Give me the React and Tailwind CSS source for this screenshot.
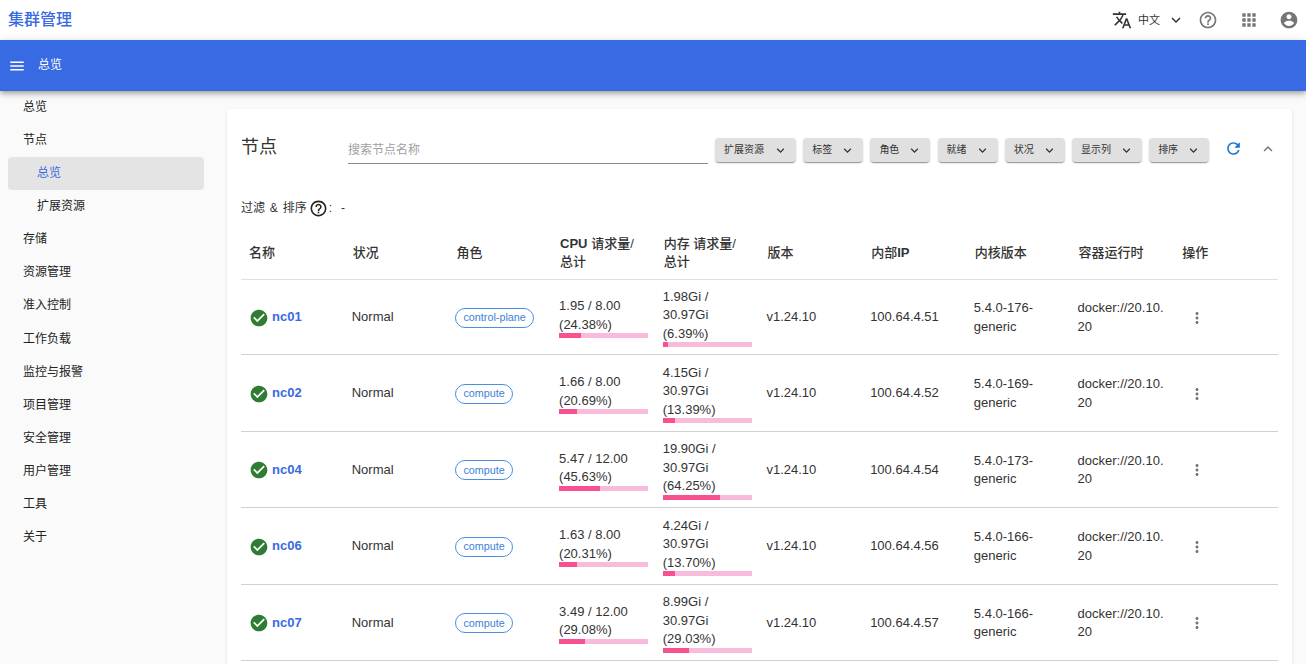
const P = {
  menu: "M3 18h18v-2H3v2zm0-5h18v-2H3v2zm0-7v2h18V6H3z",
  translate: "M12.87 15.07l-2.54-2.51.03-.03c1.74-1.94 2.98-4.17 3.71-6.53H17V4h-7V2H8v2H1v1.99h11.17C11.5 7.92 10.44 9.75 9 11.35 8.07 10.32 7.3 9.19 6.69 8h-2c.73 1.63 1.73 3.17 2.98 4.56l-5.09 5.02L4 19l5-5 3.11 3.11.76-2.04zM18.5 10h-2L12 22h2l1.12-3h4.75L21 22h2l-4.5-12zm-2.62 7l1.62-4.33L19.12 17h-3.24z",
  more: "M16.59 8.59L12 13.17 7.41 8.59 6 10l6 6 6-6z",
  less: "M12 8l-6 6 1.41 1.41L12 10.83l4.59 4.58L18 14z",
  help: "M11 18h2v-2h-2v2zm1-16C6.48 2 2 6.48 2 12s4.48 10 10 10 10-4.48 10-10S17.52 2 12 2zm0 18c-4.41 0-8-3.59-8-8s3.59-8 8-8 8 3.59 8 8-3.59 8-8 8zm0-14c-2.21 0-4 1.79-4 4h2c0-1.1.9-2 2-2s2 .9 2 2c0 2-3 1.75-3 5h2c0-2.25 3-2.5 3-5 0-2.21-1.79-4-4-4z",
  apps: "M4 8h4V4H4v4zm6 12h4v-4h-4v4zm-6 0h4v-4H4v4zm0-6h4v-4H4v4zm6 0h4v-4h-4v4zm6-10v4h4V4h-4zm-6 4h4V4h-4v4zm6 6h4v-4h-4v4zm0 6h4v-4h-4v4z",
  account: "M12 2C6.48 2 2 6.48 2 12s4.48 10 10 10 10-4.48 10-10S17.52 2 12 2zm0 3c1.66 0 3 1.34 3 3s-1.34 3-3 3-3-1.34-3-3 1.34-3 3-3zm0 14.2c-2.5 0-4.71-1.28-6-3.22.03-1.99 4-3.08 6-3.08 1.99 0 5.97 1.09 6 3.08-1.29 1.94-3.5 3.22-6 3.22z",
  refresh: "M17.65 6.35C16.2 4.9 14.35 4 12 4c-4.42 0-7.99 3.58-7.99 8s3.57 8 7.99 8c3.73 0 6.84-2.55 7.73-6h-2.08c-.82 2.33-3.04 4-5.65 4-3.31 0-6-2.69-6-6s2.69-6 6-6c1.66 0 3.14.69 4.22 1.78L13 11h7V4l-2.35 2.35z",
  vert: "M12 8c1.1 0 2-.9 2-2s-.9-2-2-2-2 .9-2 2 .9 2 2 2zm0 2c-1.1 0-2 .9-2 2s.9 2 2 2 2-.9 2-2-.9-2-2-2zm0 6c-1.1 0-2 .9-2 2s.9 2 2 2 2-.9 2-2-.9-2-2-2z",
  check: "M12 2C6.48 2 2 6.48 2 12s4.48 10 10 10 10-4.48 10-10S17.52 2 12 2zm-2 15l-5-5 1.41-1.41L10 14.17l7.59-7.59L19 8l-9 9z",
};

const Icon = ({ d, className }) => (
  <svg viewBox="0 0 24 24" fill="currentColor" className={className}>
    <path d={d} />
  </svg>
);

const nav = [
  ["总览"], ["节点"], ["总览", "active"], ["扩展资源", "sub"], ["存储"], ["资源管理"], ["准入控制"],
  ["工作负载"], ["监控与报警"], ["项目管理"], ["安全管理"], ["用户管理"], ["工具"], ["关于"],
];

const filters = [
  ["扩展资源", "w-[81px]"], ["标签", "w-[60px]"], ["角色", "w-[60px]"], ["就绪", "w-[60px]"],
  ["状况", "w-[60px]"], ["显示列", "w-[70px]"], ["排序", "w-[60px]"],
];

const B = ({ children }) => <span className="font-bold">{children}</span>;

const heads = [
  "名称", "状况", "角色",
  <div key="cpu" className="leading-[18px]">
    <div><B>CPU</B><span> 请求量/</span></div>
    <div>总计</div>
  </div>,
  <div key="mem" className="leading-[18px]">
    <div>内存 请求量/</div>
    <div>总计</div>
  </div>,
  "版本",
  <span key="ip">内部<B>IP</B></span>,
  "内核版本", "容器运行时", "操作",
];

const rows = [
  { h: "h-[75px]", n: "nc01", role: "control-plane", c: ["1.95 / 8.00", "(24.38%)"], cp: 24.38, m: ["1.98Gi /", "30.97Gi", "(6.39%)"], mp: 6.39, ip: "100.64.4.51", k: "176" },
  { h: "h-[77px]", n: "nc02", role: "compute", c: ["1.66 / 8.00", "(20.69%)"], cp: 20.69, m: ["4.15Gi /", "30.97Gi", "(13.39%)"], mp: 13.39, ip: "100.64.4.52", k: "169" },
  { h: "h-[76px]", n: "nc04", role: "compute", c: ["5.47 / 12.00", "(45.63%)"], cp: 45.63, m: ["19.90Gi /", "30.97Gi", "(64.25%)"], mp: 64.25, ip: "100.64.4.54", k: "173" },
  { h: "h-[77px]", n: "nc06", role: "compute", c: ["1.63 / 8.00", "(20.31%)"], cp: 20.31, m: ["4.24Gi /", "30.97Gi", "(13.70%)"], mp: 13.7, ip: "100.64.4.56", k: "166" },
  { h: "h-[76px]", n: "nc07", role: "compute", c: ["3.49 / 12.00", "(29.08%)"], cp: 29.08, m: ["8.99Gi /", "30.97Gi", "(29.03%)"], mp: 29.03, ip: "100.64.4.57", k: "166" },
];

const Usage = ({ lines, pct }) => (
  <div className="w-[89px]">
    {lines.map((l) => (
      <div key={l}>{l}</div>
    ))}
    <div className="h-[5px] -mt-[1px] bg-[#f8bbdc]">
      <div className="h-full bg-[#f8518f]" style={{ width: `${pct}%` }} />
    </div>
  </div>
);

const cell = "pl-[7px] pr-2 pt-[8px] pb-[6px] align-middle";

export default function App() {
  return (
    <div className="h-[664px] overflow-hidden bg-[#fafafa] text-[13px] leading-[18.5px] text-[#333] font-['Liberation_Sans','Noto_Sans_CJK_SC',sans-serif]">
      <header className="h-10 bg-white flex items-center pl-2 pr-[7px]">
        <div className="text-[16px] font-medium text-[#3a6ae2]">集群管理</div>
        <div className="ml-auto flex items-center text-[#757575]">
          <Icon d={P.translate} className="w-[20px] h-[20px] text-[#333]" />
          <span className="ml-[6px] text-[11px] text-[#333]">中文</span>
          <Icon d={P.more} className="ml-[7px] w-[18px] h-[18px] text-[#333]" />
          <Icon d={P.help} className="ml-[13px] w-[20px] h-[20px]" />
          <Icon d={P.apps} className="ml-[21px] w-[20px] h-[20px]" />
          <Icon d={P.account} className="ml-[20px] w-[20px] h-[20px]" />
        </div>
      </header>

      <div className="relative z-10 h-[51px] bg-[#386ae3] text-white flex items-center pl-[8px] shadow-[0_2px_4px_-1px_rgba(0,0,0,0.2),0_4px_5px_0_rgba(0,0,0,0.14),0_1px_10px_0_rgba(0,0,0,0.12)]">
        <Icon d={P.menu} className="w-[18px] h-[18px]" />
        <span className="ml-[12px] text-[12px]">总览</span>
      </div>

      <div className="flex">
        <nav className="w-[212px] shrink-0 -mt-[0.7px] pl-2">
          {nav.map(([label, kind], i) => (
            <div
              key={i}
              className={
                kind === "active"
                  ? "w-[196px] h-[33.15px] flex items-center pl-[29px] rounded bg-[#e4e4e4] text-[#3a6ae2] text-[12px]"
                  : kind === "sub"
                  ? "h-[33.15px] flex items-center pl-[29px] text-[12px] text-[#222]"
                  : "h-[33.15px] flex items-center pl-[15px] text-[12px] text-[#222]"
              }
            >
              {label}
            </div>
          ))}
        </nav>

        <main className="ml-[15px] mt-[18px] w-[1065px] h-[700px] shrink-0 bg-white rounded shadow-[0_1px_3px_0_rgba(0,0,0,0.12)] px-[14px]">
          <div className="flex items-start pt-[27px] h-[90px]">
            <h1 className="text-[18px] leading-[20px] pt-[1px] text-[#333] w-[107px]">节点</h1>
            <div className="w-[360px] h-[28px] border-b border-[#8a8a8a] text-[12px] text-[#a0a0a0] leading-[28px]">搜索节点名称</div>
            <div className="ml-[7px] flex gap-[7.2px] mt-[2px]">
              {filters.map(([f, w]) => (
                <div key={f} className={`${w} h-[24px] flex items-center justify-between pl-[9px] pr-[8px] rounded bg-[#e0e0e0] text-[10px] text-[#333] shadow-[0_2px_1px_-1px_rgba(0,0,0,0.3),0_1px_2px_0_rgba(0,0,0,0.2)]`}>
                  <span>{f}</span>
                  <Icon d={P.more} className="w-[15px] h-[15px]" />
                </div>
              ))}
            </div>
            <Icon d={P.refresh} className="ml-[15px] mt-[3px] w-[19px] h-[19px] text-[#1976d2]" />
            <Icon d={P.less} className="ml-[16px] mt-[4px] w-[18px] h-[18px] text-[#757575]" />
          </div>

          <div className="flex items-center h-[18px] text-[12px] text-[#333] [word-spacing:1.5px]">
            过滤 &amp; 排序
            <Icon d={P.help} className="ml-[2px] w-[19px] h-[19px] text-[#222]" />
            <span className="ml-[1px]">:</span>
            <span className="ml-[9px]">-</span>
          </div>

          <table className="mt-[17px] w-[1037px] table-fixed border-collapse">
            <thead>
              <tr className="h-[45px] border-b border-[#e0e0e0]">
                {heads.map((h, i) => (
                  <th key={i} className="px-2 pt-0 pb-[6px] text-left align-middle font-medium text-[13px] text-[#333]">
                    {h}
                  </th>
                ))}
              </tr>
            </thead>
            <tbody>
              {rows.map((r) => (
                <tr key={r.n} className={`${r.h} border-b border-[#d0d0d0]`}>
                  <td className="pl-[8px] pr-2 pt-[8px] pb-[6px] align-middle">
                    <div className="flex items-center">
                      <Icon d={P.check} className="w-[20px] h-[20px] text-[#2e7d32]" />
                      <span className="ml-[3px] font-bold text-[#3a6ae2]">{r.n}</span>
                    </div>
                  </td>
                  <td className={cell}>Normal</td>
                  <td className={cell}>
                    <span className="inline-flex h-[20px] items-center rounded-full border border-[#4a90e2] px-[7px] text-[10.8px] text-[#3b82d9]">{r.role}</span>
                  </td>
                  <td className={cell}><Usage lines={r.c} pct={r.cp} /></td>
                  <td className={cell}><Usage lines={r.m} pct={r.mp} /></td>
                  <td className={cell}>v1.24.10</td>
                  <td className={cell}>{r.ip}</td>
                  <td className={cell}>
                    <div>5.4.0-{r.k}-</div>
                    <div>generic</div>
                  </td>
                  <td className="pl-[7px] pr-0 pt-[8px] pb-[6px] align-middle">
                    <div>docker://20.10.</div>
                    <div>20</div>
                  </td>
                  <td className="pl-[14px] pr-2 pt-[8px] pb-[6px] align-middle">
                    <Icon d={P.vert} className="w-[18px] h-[18px] text-[#757575]" />
                  </td>
                </tr>
              ))}
            </tbody>
          </table>
        </main>
      </div>
    </div>
  );
}
